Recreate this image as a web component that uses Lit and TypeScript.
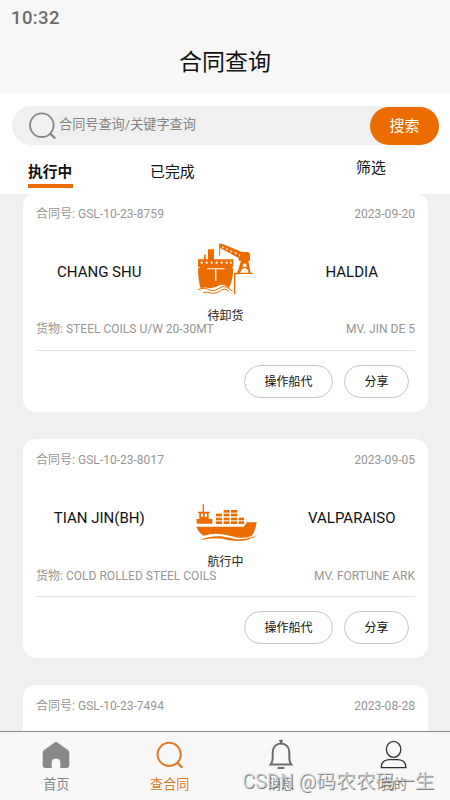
import { LitElement, html, svg, css } from "lit";
import { customElement, property } from "lit/decorators.js";

interface Contract {
  no: string;
  date: string;
  from: string;
  to: string;
  status: "unloading" | "sailing";
  goods: string;
  vessel: string;
}

const contracts: Contract[] = [
  { no: "GSL-10-23-8759", date: "2023-09-20", from: "CHANG SHU", to: "HALDIA", status: "unloading", goods: "STEEL COILS U/W 20-30MT", vessel: "MV. JIN DE 5" },
  { no: "GSL-10-23-8017", date: "2023-09-05", from: "TIAN JIN(BH)", to: "VALPARAISO", status: "sailing", goods: "COLD ROLLED STEEL COILS", vessel: "MV. FORTUNE ARK" },
  { no: "GSL-10-23-7494", date: "2023-08-28", from: "", to: "", status: "sailing", goods: "", vessel: "" },
];

// Ship at the quay with a crane
const unloadingIcon = svg`
  <path fill="#ec6c00" d="M54 88H72V74H77V88H84V58H102V88H160V110H157V115H160Q159 152 147 175Q134 161 119 165Q105 175 90 175Q76 170 62 175Q54 150 54 115H58V110H54Z"/>
  <g fill="#fff">
    <rect x="62" y="95" width="6" height="6"/><rect x="77" y="95" width="6" height="6"/>
    <rect x="92" y="95" width="6" height="6"/><rect x="107" y="95" width="6" height="6"/>
    <rect x="122" y="95" width="6" height="6"/><rect x="137" y="95" width="6" height="6"/><rect x="150" y="95" width="5" height="6"/>
    <path d="M81 115H134V118H109V152H105V118H81Z"/>
  </g>
  <g fill="none" stroke="#ec6c00" stroke-width="3">
    <path d="M54 179Q73 170 92 181Q106 184 119 174Q135 162 158 184"/>
    <path d="M70 188Q82 183 94 190Q110 192 122 182Q134 172 148 185"/>
    <path d="M164 192V131H176" stroke-width="4"/>
    <path d="M119 77V43" stroke-width="3"/>
  </g>
  <path fill="#ec6c00" d="M117 41H126L186 66H205L210 73V92H205L212 128H218V132H165V128H172L183 92H176V84L120 54Z"/>
  <path fill="#fff" d="M125 49L132 52L129 56ZM138 54L145 58L140 61ZM151 60L158 64L153 68ZM164 66L171 69L166 75ZM176 72L181 74L178 80ZM190 101H198L201 110H187ZM184 119L194 113L204 119L205 128H181Z"/>
`;

// Container ship under way
const sailingIcon = svg`
  <g fill="#ec6c00">
    <path d="M68 43H72V65H89V69H86V87H97V101H50V87H58V69H54V65H68Z"/>
    <path d="M49 110H191L201 97H230Q227 122 214 139Q185 148 156 139Q111 124 71 137Q56 128 49 110Z"/>
    <path d="M59 151Q87 137 124 139Q150 144 166 148Q197 150 231 136Q203 155 168 153Q145 151 128 146Q94 142 59 151Z"/>
    <rect x="108" y="71" width="18" height="8"/><rect x="108" y="83" width="18" height="8"/><rect x="108" y="94" width="18" height="8"/>
    <rect x="131" y="60" width="18" height="8"/><rect x="131" y="71" width="18" height="8"/><rect x="131" y="83" width="18" height="8"/><rect x="131" y="94" width="18" height="8"/>
    <rect x="153" y="60" width="19" height="8"/><rect x="153" y="71" width="19" height="8"/><rect x="153" y="83" width="19" height="8"/><rect x="153" y="94" width="19" height="8"/>
    <rect x="176" y="83" width="16" height="8"/><rect x="176" y="94" width="16" height="8"/>
  </g>
  <path fill="#fff" d="M63 71H69V80H63ZM74 71H81V80H74Z"/>
`;

@customElement("contract-card")
export class ContractCard extends LitElement {
  @property({ attribute: false }) item!: Contract;

  static styles = css`
    :host { display: block; flex: none; box-sizing: border-box; height: 219px; padding: 0 13px; border-radius: 13px; background: #fff; font-size: 12.04px; color: #969696; }
    .row { display: flex; justify-content: space-between; }
    .head { height: 37px; padding-top: 5px; box-sizing: border-box; line-height: 32px; }
    .route { display: grid; grid-template-columns: 1fr 126px 1fr; height: 95px; text-align: center; }
    .port { padding-top: 32px; line-height: 20px; font-size: 15px; color: #111; white-space: nowrap; }
    .status { display: flex; flex-direction: column; align-items: center; line-height: 22px; font-size: 12px; color: #222; }
    .ship { display: block; width: 90px; height: 75px; }
    .goods { margin-top: -4px; height: 16px; line-height: 16px; }
    .sailing { line-height: 18px; }
    .actions { display: flex; justify-content: flex-end; gap: 11px; margin-top: 13px; padding: 14px 6px 0 0; border-top: 1px solid #e2e2e2; }
    .btn { box-sizing: border-box; width: 89px; height: 33px; border: 1px solid #c4c4c4; border-radius: 17px; text-align: center; line-height: 33px; font-size: 12px; color: #111; }
    .small { width: 65px; }
  `;

  render() {
    const c = this.item;
    const sailing = c.status === "sailing";
    return html`
      <div class="row head"><span>合同号: ${c.no}</span><span>${c.date}</span></div>
      <div class="route">
        <div class="port">${c.from}</div>
        <div class="status">
          <svg class="ship" viewBox=${sailing ? "3 -42 270 225" : "3 0 270 225"}>${sailing ? sailingIcon : unloadingIcon}</svg>
          <span>${sailing ? "航行中" : "待卸货"}</span>
        </div>
        <div class="port">${c.to}</div>
      </div>
      <div class=${sailing ? "row goods sailing" : "row goods"}><span>货物: ${c.goods}</span><span>${c.vessel}</span></div>
      <div class="actions"><div class="btn">操作船代</div><div class="btn small">分享</div></div>
    `;
  }
}

const homeIcon = svg`<path fill="#888" d="M15 2.2Q16 1.6 17 2.2L28 10Q29.3 11 29.3 12.5V25Q29.3 28 26.5 28H20.3V22.5Q20.3 18.5 16 18.5T11.7 22.5V28H5.5Q2.7 28 2.7 25V12.5Q2.7 11 4 10Z"/>`;
const searchIcon = svg`<g fill="none" stroke="#e27a26" stroke-width="2"><circle cx="15.2" cy="14.4" r="11.6"/><path d="M23.1 22.4L28.2 27.6" stroke-width="2.4"/></g>`;
const bellIcon = svg`<g fill="none" stroke="#6c6c6c" stroke-width="2"><path d="M5.6 24.6H26.4Q24.3 22 24.3 18V12A8.3 8.6 0 0 0 7.7 12V18Q7.7 22 5.6 24.6Z"/><path d="M15 0.8H17M16 0.8V3.4M13.4 28H18.6" stroke-linecap="round"/></g>`;
const userIcon = svg`<g fill="none" stroke="#333" stroke-width="1.3"><ellipse cx="15.6" cy="9.4" rx="7.2" ry="8"/><path d="M3.2 27.6Q3.1 20 11.6 19.6H19.6Q28.1 20 28 27.6Z"/></g>`;

@customElement("app-root")
export class AppRoot extends LitElement {
  static styles = css`
    :host { display: flex; flex-direction: column; position: relative; width: 450px; height: 800px; overflow: hidden; background: #f0f0f0; font-family: Roboto, "Noto Sans CJK SC", sans-serif; }
    .top { flex: none; height: 93px; background: #f7f7f7; }
    .time { height: 35px; padding-left: 11px; line-height: 36px; font-size: 18.5px; font-weight: 500; letter-spacing: 0.4px; color: #6c6c6c; }
    .title { height: 56px; line-height: 56px; text-align: center; font-size: 23px; color: #111; }
    .filters { flex: none; height: 101px; padding: 13px 11px 0 12px; box-sizing: border-box; background: #fff; }
    .search { display: flex; align-items: center; height: 39px; border-radius: 20px; background: #f0f0f0; }
    .lens { flex: none; width: 32px; height: 32px; margin-left: 14px; }
    .hint { flex: 1; margin: -1px 0 0 1px; font-size: 13.15px; line-height: 20px; color: #848484; }
    .go { width: 69px; height: 38px; margin-top: 1px; border-radius: 19px; background: #ec6c00; color: #fff; font-size: 15px; line-height: 38px; text-align: center; }
    .tabs { display: flex; align-items: flex-start; padding: 12px 0 0 16px; font-size: 14.9px; line-height: 30px; color: #111; }
    .tab { width: 45px; height: 27px; margin-right: 77px; }
    .active { border-bottom: 4px solid #ec6c00; font-weight: 700; font-size: 14.7px; }
    .filter { margin: -4px 0 0 84px; }
    .list { flex: 1; min-height: 0; display: flex; flex-direction: column; gap: 27px; margin-top: -1px; padding: 0 22px 0 23px; overflow: hidden; }
    .nav { flex: none; display: grid; grid-template-columns: repeat(4, 1fr); height: 69px; box-sizing: border-box; border-top: 1px solid #888; background: #f8f8f8; font-size: 13.1px; line-height: 18px; color: #858585; }
    .item { display: flex; flex-direction: column; align-items: center; padding-top: 8px; }
    .item svg { display: block; width: 32px; height: 32px; margin-bottom: 4px; overflow: visible; }
    .current { padding-left: 2px; color: #e27a26; }
    .mark { position: absolute; left: 242px; top: 769px; font-size: 19.7px; line-height: 26px; white-space: nowrap; color: rgba(225, 225, 225, 0.75); text-shadow: 1px 1px 0 rgba(90, 90, 90, 0.75); }
  `;

  render() {
    return html`
      <div class="top"><div class="time">10:32</div><div class="title">合同查询</div></div>
      <div class="filters">
        <div class="search">
          <svg class="lens" viewBox="0 0 32 32"><g fill="none" stroke="#888" stroke-width="1.8"><circle cx="15.8" cy="15.2" r="11.8"/><path d="M23.8 23.2L29.2 28.4" stroke-width="2.2"/></g></svg>
          <span class="hint">合同号查询/关键字查询</span>
          <div class="go">搜索</div>
        </div>
        <div class="tabs"><div class="tab active">执行中</div><div class="tab">已完成</div><div class="filter">筛选</div></div>
      </div>
      <div class="list">${contracts.map((c) => html`<contract-card .item=${c}></contract-card>`)}</div>
      <div class="nav">
        <div class="item"><svg viewBox="0 0 32 32">${homeIcon}</svg>首页</div>
        <div class="item current"><svg viewBox="0 0 32 32">${searchIcon}</svg>查合同</div>
        <div class="item"><svg viewBox="0 0 32 32">${bellIcon}</svg>消息</div>
        <div class="item"><svg viewBox="0 0 32 32">${userIcon}</svg>我的</div>
      </div>
      <div class="mark">CSDN @码农农码一生</div>
    `;
  }
}
